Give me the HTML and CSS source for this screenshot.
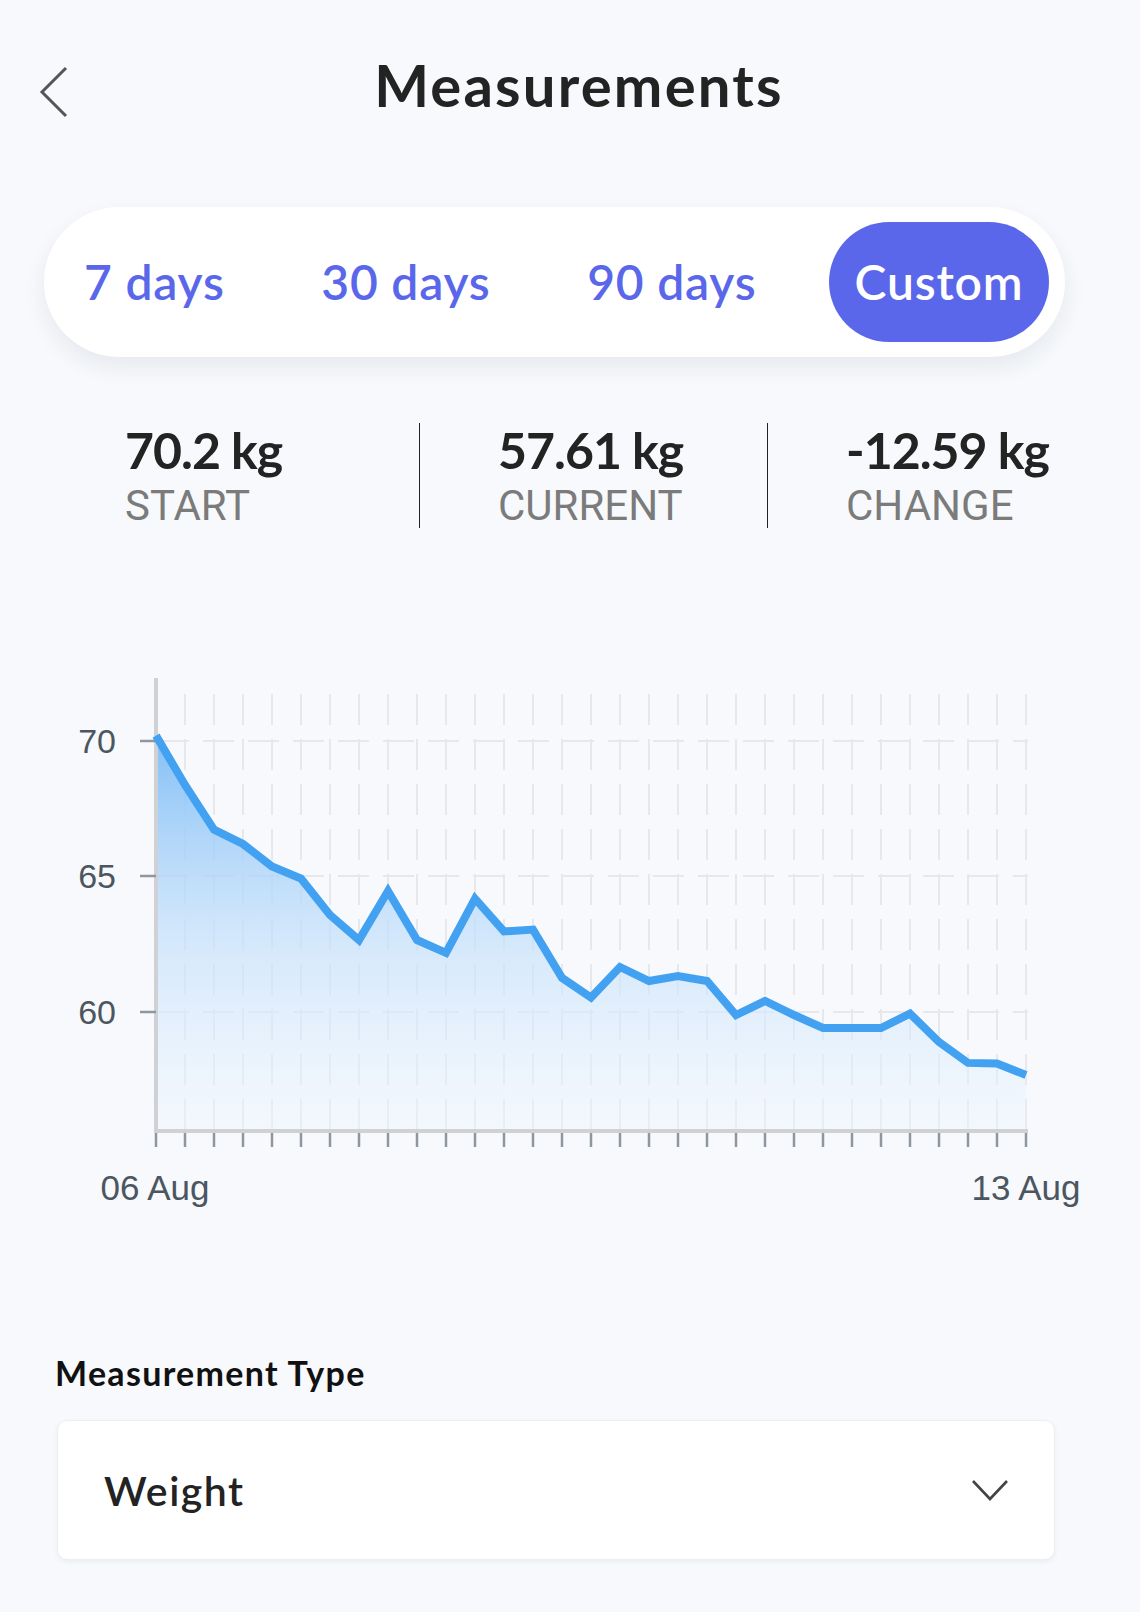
FILE: index.html
```html
<!DOCTYPE html>
<html lang="en">
<head>
<meta charset="utf-8">
<title>Measurements</title>
<link rel="stylesheet" href="styles.css">
</head>
<body>
<div class="screen">
  <header class="header">
    <button class="back" aria-label="Back">
      <svg width="30" height="54" viewBox="0 0 30 54"><polyline points="27,2 3,26 27,50" fill="none" stroke="#555" stroke-width="3"/></svg>
    </button>
    <h1 class="title">Measurements</h1>
    <span class="spacer"></span>
  </header>

  <nav class="segments">
    <span class="seg">7 days</span>
    <span class="seg">30 days</span>
    <span class="seg">90 days</span>
    <span class="seg active">Custom</span>
  </nav>

  <section class="stats">
    <div class="stat first">
      <div class="value">70.2 kg</div>
      <div class="label">START</div>
    </div>
    <div class="stat">
      <div class="value">57.61 kg</div>
      <div class="label">CURRENT</div>
    </div>
    <div class="stat">
      <div class="value">-12.59 kg</div>
      <div class="label">CHANGE</div>
    </div>
  </section>

  <div class="chart">
    <svg width="1140" height="580" viewBox="0 0 1140 580">
      <defs>
        <linearGradient id="fillGrad" x1="0" y1="95" x2="0" y2="491" gradientUnits="userSpaceOnUse">
          <stop offset="0" stop-color="#7dbcf6" stop-opacity="0.95"/>
          <stop offset="0.5" stop-color="#c2dffb" stop-opacity="0.7"/>
          <stop offset="1" stop-color="#eef6fe" stop-opacity="0.4"/>
        </linearGradient>
      </defs>
      <g class="grid" id="grid"></g>
      <polygon id="area" fill="url(#fillGrad)" points=""/>
      <line x1="156" y1="38" x2="156" y2="492" stroke="#cfd1d4" stroke-width="4"/>
      <line x1="154" y1="491" x2="1028" y2="491" stroke="#cfd1d4" stroke-width="4"/>
      <g id="ticks" stroke="#8e979d" stroke-width="2.5"></g>
      <g stroke="#8e979d" stroke-width="2.5">
        <line x1="140" y1="101" x2="156" y2="101"/>
        <line x1="140" y1="236" x2="156" y2="236"/>
        <line x1="140" y1="372" x2="156" y2="372"/>
      </g>
      <polyline id="line" fill="none" stroke="#42a1f1" stroke-width="8" stroke-linejoin="miter" points=""/>
      <g class="ylabels">
        <text x="116" y="113" text-anchor="end">70</text>
        <text x="116" y="248" text-anchor="end">65</text>
        <text x="116" y="384" text-anchor="end">60</text>
      </g>
      <g class="xlabels">
        <text x="155" y="560" text-anchor="middle">06 Aug</text>
        <text x="1026" y="560" text-anchor="middle">13 Aug</text>
      </g>
    </svg>
  </div>

  <section class="type">
    <div class="type-label">Measurement Type</div>
    <div class="select">
      <span class="select-value">Weight</span>
      <svg width="38" height="22" viewBox="0 0 38 22"><polyline points="2,2 19,20 36,2" fill="none" stroke="#444" stroke-width="2.6"/></svg>
    </div>
  </section>
</div>
<script>
  (function () {
    var ys = [95.6,145,189.6,204,226.4,238.6,275,300,251,300,312.9,258.6,291.4,289.6,337.9,357.5,327,341,336,341,375,361,375,388,388,388,373.6,402,422.9,423.6,435];
    var pts = ys.map(function (y, i) { return (156 + i * 29) + ',' + y; });
    document.getElementById('line').setAttribute('points', pts.join(' '));
    document.getElementById('area').setAttribute('points', '156,491 ' + pts.join(' ') + ' 1026,491');
    var ns = 'http://www.w3.org/2000/svg';
    var grid = document.getElementById('grid');
    var ticks = document.getElementById('ticks');
    for (var i = 0; i <= 30; i++) {
      var x = 156 + i * 29;
      if (i > 0) {
        var g = document.createElementNS(ns, 'line');
        g.setAttribute('x1', x); g.setAttribute('x2', x);
        g.setAttribute('y1', 54); g.setAttribute('y2', 489);
        grid.appendChild(g);
      }
      var t = document.createElementNS(ns, 'line');
      t.setAttribute('x1', x); t.setAttribute('x2', x);
      t.setAttribute('y1', 493); t.setAttribute('y2', 507);
      ticks.appendChild(t);
    }
    [101, 236, 372].forEach(function (y) {
      var h = document.createElementNS(ns, 'line');
      h.setAttribute('x1', 158); h.setAttribute('x2', 1028);
      h.setAttribute('y1', y); h.setAttribute('y2', y);
      grid.appendChild(h);
    });
  })();
</script>
</body>
</html>
```

FILE: styles.css
```css
* { box-sizing: border-box; }
html, body { margin: 0; padding: 0; }
body {
  background: #f7f9fc;
  font-family: "Lato", "Noto Sans", sans-serif;
  color: #222;
}
.screen { width: 1140px; min-height: 1612px; }

.header {
  display: grid;
  grid-template-columns: 120px 1fr 120px;
  padding-top: 50px;
  height: 150px;
  align-items: start;
}
.back {
  background: none;
  border: 0;
  padding: 0;
  margin: 16px 0 0 39px;
  width: 30px;
  height: 54px;
  display: block;
}
.title {
  margin: 0;
  text-align: center;
  font-size: 58px;
  line-height: 70px;
  font-weight: 700;
  letter-spacing: 2.2px;
  color: #232323;
  padding-left: 18px;
}

.segments {
  margin: 57px 0 0 44px;
  width: 1021px;
  height: 150px;
  background: #fff;
  border-radius: 75px;
  box-shadow: 0 10px 22px rgba(40, 50, 80, 0.08);
  display: flex;
  align-items: center;
  justify-content: space-between;
  padding: 0 16px;
}
.seg {
  font-size: 48px;
  line-height: 120px;
  font-weight: 600;
  color: #5b67ea;
  padding: 0 24px;
  letter-spacing: 0.8px;
  border-radius: 60px;
}
.seg.active {
  background: #5b67ea;
  color: #fff;
  width: 220px;
  text-align: center;
  padding: 0;
}

.stats {
  margin-top: 66px;
  height: 105px;
  display: grid;
  grid-template-columns: 419px 348px 1fr;
}
.stat {
  border-left: 1.5px solid #222;
  padding-left: 78px;
}
.stat.first {
  border-left: 0;
  padding-left: 125px;
}
.value {
  font-size: 50px;
  line-height: 55px;
  font-weight: 700;
  color: #232323;
  letter-spacing: -1px;
}
.label {
  font-family: "Roboto", "Liberation Sans", sans-serif;
  font-size: 42px;
  line-height: 42px;
  margin-top: 7px;
  color: #7b7b7b;
}

.chart { margin-top: 112px; height: 580px; }
.chart svg { display: block; }
.grid line {
  stroke: #e6e8ec;
  stroke-width: 2;
  stroke-dasharray: 31 14;
}
.ylabels text, .xlabels text {
  font-family: "Liberation Sans", "Roboto", sans-serif;
  font-size: 34px;
  fill: #4b5660;
}
.xlabels text { font-size: 35px; }

.type { margin-top: 133px; }
.type-label {
  padding-left: 55px;
  font-size: 34px;
  line-height: 40px;
  font-weight: 700;
  letter-spacing: 1.3px;
  color: #111;
}
.select {
  margin: 27px 0 0 57px;
  width: 998px;
  height: 140px;
  background: #fff;
  border: 1px solid #eceef1;
  border-radius: 10px;
  box-shadow: 0 2px 5px rgba(0, 0, 0, 0.05);
  display: flex;
  align-items: center;
  justify-content: space-between;
  padding: 0 45px 0 46px;
}
.select-value {
  font-size: 41px;
  font-weight: 600;
  letter-spacing: 1.5px;
  color: #232323;
}
```
